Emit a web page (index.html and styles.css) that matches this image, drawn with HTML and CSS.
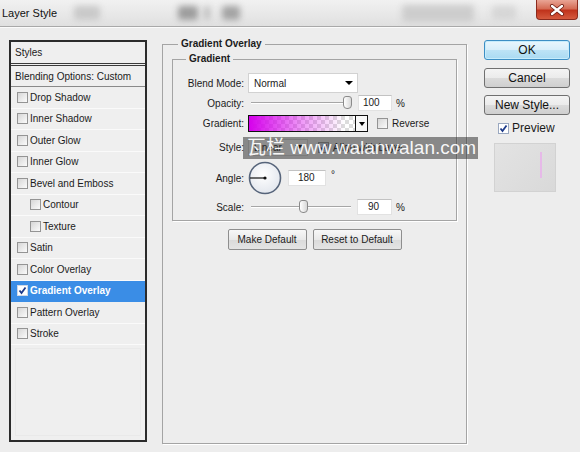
FILE: index.html
```html
<!DOCTYPE html>
<html>
<head>
<meta charset="utf-8">
<link rel="stylesheet" href="styles.css">
</head>
<body>
<div class="titlebar">
  <span class="title">Layer Style</span>
  <span class="blob b1"></span>
  <span class="blob b2"></span>
  <span class="blob b3"></span>
  <span class="blob b4"></span>
  <span class="blob b5"></span>
  <span class="blob b6"></span>
  <div class="close">
    <svg width="16" height="12" viewBox="0 0 16 12"><path d="M3 2 L13 10 M13 2 L3 10" stroke="#6b1a10" stroke-width="4" stroke-linecap="round"/><path d="M3 2 L13 10 M13 2 L3 10" stroke="#fff" stroke-width="2.4" stroke-linecap="round"/></svg>
  </div>
</div>

<div class="main">
  <div class="styles">
    <div class="shead">Styles</div>
    <div class="sblend">Blending Options: Custom</div>
    <div class="item"><span class="cb"></span>Drop Shadow</div>
    <div class="item"><span class="cb"></span>Inner Shadow</div>
    <div class="item"><span class="cb"></span>Outer Glow</div>
    <div class="item"><span class="cb"></span>Inner Glow</div>
    <div class="item"><span class="cb"></span>Bevel and Emboss</div>
    <div class="item sub"><span class="cb"></span>Contour</div>
    <div class="item sub"><span class="cb"></span>Texture</div>
    <div class="item"><span class="cb"></span>Satin</div>
    <div class="item"><span class="cb"></span>Color Overlay</div>
    <div class="item active"><span class="cb white"><svg width="9" height="9" viewBox="0 0 9 9"><path d="M1.5 4.5 L3.5 7 L7.5 1.5" stroke="#1d3a8a" stroke-width="1.8" fill="none"/></svg></span>Gradient Overlay</div>
    <div class="item"><span class="cb"></span>Pattern Overlay</div>
    <div class="item"><span class="cb"></span>Stroke</div>
    <div class="sfill"></div>
  </div>

  <fieldset class="outer">
    <legend class="olegend">Gradient Overlay</legend>
    <fieldset class="inner">
      <legend class="ilegend">Gradient</legend>
      <div class="rows">
        <div class="row r-blend">
          <span class="lbl">Blend Mode:</span>
          <div class="select blend"><span>Normal</span><span class="arrow"></span></div>
        </div>
        <div class="row r-opac">
          <span class="lbl">Opacity:</span>
          <div class="slider"><div class="track"></div><div class="thumb t-opac"></div></div>
          <div class="num">100</div>
          <span class="pct">%</span>
        </div>
        <div class="row r-grad">
          <span class="lbl">Gradient:</span>
          <div class="swatch"><div class="gfill"></div><div class="gdrop"><span class="arrow small"></span></div></div>
          <span class="cb rev"></span><span class="cbtext">Reverse</span>
        </div>
        <div class="row r-style">
          <span class="lbl">Style:</span>
          <div class="select style"><span>Linear</span><span class="arrow"></span></div>
          <span class="cb align"><svg width="9" height="9" viewBox="0 0 9 9"><path d="M1.5 4.5 L3.5 7 L7.5 1.5" stroke="#1d3a8a" stroke-width="1.8" fill="none"/></svg></span><span class="cbtext">Align with Layer</span>
        </div>
        <div class="row r-angle">
          <span class="lbl">Angle:</span>
          <svg class="dial" width="34" height="34" viewBox="0 0 34 34">
            <defs><radialGradient id="dg" cx="45%" cy="40%" r="60%"><stop offset="0" stop-color="#ffffff"/><stop offset="1" stop-color="#e3e7ee"/></radialGradient></defs>
            <circle cx="17" cy="17" r="15.5" fill="url(#dg)" stroke="#56647a" stroke-width="1.6"/>
            <line x1="2" y1="17" x2="17" y2="17" stroke="#111" stroke-width="1.2"/>
            <circle cx="17" cy="17" r="1.6" fill="#111"/>
          </svg>
          <div class="num angle">180</div>
          <span class="deg">°</span>
        </div>
        <div class="row r-scale">
          <span class="lbl">Scale:</span>
          <div class="slider"><div class="track"></div><div class="thumb t-scale"></div></div>
          <div class="num scale">90</div>
          <span class="pct">%</span>
        </div>
      </div>
    </fieldset>
    <div class="defbtns">
      <div class="btn b-make">Make Default</div>
      <div class="btn b-reset">Reset to Default</div>
    </div>
  </fieldset>

  <div class="side">
    <div class="rbtn ok">OK</div>
    <div class="rbtn cancel">Cancel</div>
    <div class="rbtn newst">New Style...</div>
    <div class="prevrow"><span class="cb"><svg width="9" height="9" viewBox="0 0 9 9"><path d="M1.5 4.5 L3.5 7 L7.5 1.5" stroke="#1d3a8a" stroke-width="1.8" fill="none"/></svg></span><span class="prevtext">Preview</span></div>
    <div class="preview"><div class="pline"></div></div>
  </div>
</div>

<div class="watermark">瓦栏 www.walanwalan.com</div>
</body>
</html>
```

FILE: styles.css
```css
html, body {
  margin: 0;
  padding: 0;
}
body {
  width: 580px;
  height: 452px;
  overflow: hidden;
  position: relative;
  background: #ededed;
  font-family: "Liberation Sans", Arial, sans-serif;
  font-size: 10px;
  color: #1b1b1b;
}

/* title bar */
.titlebar {
  height: 26px;
  border-bottom: 1px solid #a9a9a9;
  box-shadow: 0 1px 0 #fbfbfb;
  background: linear-gradient(#f1f1f1, #e0e0e0);
  display: flex;
  align-items: center;
  overflow: hidden;
}
.title {
  font-size: 11px;
  margin-left: 2px;
  color: #111;
  width: 60px;
}
.blob {
  height: 14px;
  border-radius: 3px;
  filter: blur(3px);
  background: #c4c4c4;
}
.b1 { margin-left: 12px; width: 26px; background: #c9c9c9; }
.b2 { margin-left: 78px; width: 20px; background: #9d9d9d; }
.b3 { margin-left: 6px; width: 6px; background: #bdbdbd; }
.b4 { margin-left: 12px; width: 18px; background: #a4a4a4; }
.b5 { margin-left: 162px; width: 72px; height: 17px; background: #cdcdcd; }
.b6 { margin-left: 18px; width: 24px; background: #d6d6d6; }
.close {
  margin-left: auto;
  margin-right: 2px;
  align-self: flex-start;
  width: 42px;
  height: 20px;
  box-sizing: border-box;
  border: 1px solid #8b2a1d;
  border-top: none;
  border-radius: 0 0 4px 4px;
  background: linear-gradient(#e9a595 0%, #d56c55 45%, #c0331c 55%, #d55a3e 100%);
  display: flex;
  align-items: center;
  justify-content: center;
}

/* main layout */
.main {
  display: flex;
  align-items: flex-start;
  padding: 13px 0 0 9px;
}

/* left styles list */
.styles {
  width: 138px;
  height: 402px;
  box-sizing: border-box;
  border: 2px solid #2b2b2b;
  background: #efefef;
  display: flex;
  flex-direction: column;
}
.shead {
  height: 21px;
  border-bottom: 3px double #3a3a3a;
  padding-left: 4px;
  display: flex;
  align-items: center;
}
.sblend {
  height: 20px;
  border-bottom: 1px solid #8a8a8a;
  padding-left: 4px;
  display: flex;
  align-items: center;
}
.item {
  height: 21.5px;
  box-sizing: border-box;
  border-bottom: 1px solid #fafafa;
  padding-left: 6px;
  display: flex;
  align-items: center;
}
.item.sub { padding-left: 19px; }
.item.active {
  background: #3a8de6;
  color: #fff;
  font-weight: bold;
  border-bottom-color: #3a8de6;
}
.sfill {
  flex: 1;
  margin: 3px 4px 4px 4px;
  border: 1px solid #e9e9e9;
}
.cb {
  width: 11px;
  height: 11px;
  box-sizing: border-box;
  border: 1px solid #949494;
  background: linear-gradient(135deg, #d6d6d6, #fbfbfb);
  margin-right: 2px;
  display: flex;
  align-items: center;
  justify-content: center;
  flex: none;
}
.cb.white { background: #fff; border-color: #cfd8e6; }

/* center group */
.outer {
  margin: -2px 0 0 15px;
  width: 305px;
  height: 406px;
  box-sizing: border-box;
  border: 1px solid #a4a4a4;
  box-shadow: 1px 1px 0 #fff;
  padding: 3px 9px 0 9px;
  min-width: 0;
}
.olegend {
  font-weight: bold;
  font-size: 10px;
  line-height: 12px;
  padding: 0 3px;
  margin-left: 6px;
}
.inner {
  margin: 0;
  width: 285px;
  box-sizing: border-box;
  border: 1px solid #a4a4a4;
  box-shadow: 1px 1px 0 #fff;
  padding: 0 0 2px 0;
  min-width: 0;
}
.ilegend {
  font-weight: bold;
  font-size: 10px;
  line-height: 12px;
  padding: 0 3px;
  margin-left: 13px;
}
.rows {
  margin-top: 8px;
  display: flex;
  flex-direction: column;
}
.row {
  display: flex;
  align-items: center;
}
.r-blend { height: 20px; }
.r-opac { height: 20px; }
.r-grad { height: 21px; }
.r-style { height: 26px; }
.r-angle { height: 36px; }
.r-scale { height: 22px; }
.lbl {
  width: 71px;
  text-align: right;
  margin-right: 4px;
  flex: none;
}
.select {
  height: 20px;
  box-sizing: border-box;
  background: #fff;
  border: 1px solid #d2d2d2;
  display: flex;
  align-items: center;
  justify-content: space-between;
  padding: 0 4px 0 5px;
}
.select.blend { width: 110px; }
.select.style { width: 60px; height: 17px; background: #f6f6f6; }
.arrow {
  width: 0;
  height: 0;
  border-left: 4px solid transparent;
  border-right: 4px solid transparent;
  border-top: 4px solid #000;
}
.arrow.small {
  border-left-width: 3px;
  border-right-width: 3px;
  border-top-width: 4px;
}
.slider {
  width: 106px;
  height: 16px;
  position: relative;
  display: flex;
  align-items: center;
}
.track {
  flex: 1;
  margin: 0 3px;
  height: 0;
  border-top: 1px solid #a6a6a6;
  border-bottom: 1px solid #fff;
}
.thumb {
  position: absolute;
  top: 1px;
  width: 9px;
  height: 13px;
  box-sizing: border-box;
  border: 1px solid #8a8a8a;
  border-radius: 3px 3px 4px 4px;
  background: linear-gradient(to right, #ffffff, #d8d8d8);
}
.t-opac { left: 95px; }
.t-scale { left: 51px; }
.num {
  width: 34px;
  height: 16px;
  box-sizing: border-box;
  background: #fff;
  border: 1px solid #e2e2e2;
  border-top-color: #c2c2c2;
  padding-left: 4px;
  line-height: 14px;
  margin-left: 4px;
}
.num.scale { margin-left: 3px; width: 35px; padding-left: 10px; }
.num.angle { width: 38px; margin-left: 6px; padding-left: 9px; }
.pct { margin-left: 4px; }
.deg { margin-left: 5px; align-self: flex-start; margin-top: 9px; }
.swatch {
  width: 120px;
  height: 17px;
  box-sizing: border-box;
  border: 1px solid #111;
  display: flex;
}
.gfill {
  flex: 1;
  background:
    linear-gradient(to right, rgba(214, 0, 236, 1), rgba(214, 0, 236, 0.4) 50%, rgba(214, 0, 236, 0) 90%),
    repeating-conic-gradient(#dcdcdc 0 25%, #ffffff 0 50%) 0 0 / 8px 8px;
}
.gdrop {
  width: 11px;
  border-left: 1px solid #111;
  background: #f7f7f7;
  display: flex;
  align-items: center;
  justify-content: center;
}
.cb.rev { margin-left: 9px; }
.cb.align { margin-left: 10px; background: #c9d3e6; }
.cbtext { margin-left: 2px; }
.dial { margin-left: 0; flex: none; }

.defbtns {
  margin-top: 8px;
  display: flex;
  justify-content: center;
  gap: 6px;
}
.btn {
  height: 21px;
  box-sizing: border-box;
  border: 1px solid #8e8e8e;
  border-radius: 2px;
  background: linear-gradient(#f7f7f7, #e9e9e9 50%, #dadada 51%, #e4e4e4);
  display: flex;
  align-items: center;
  justify-content: center;
}
.b-make { width: 79px; }
.b-reset { width: 89px; }

/* right side */
.side {
  margin-left: 17px;
  width: 86px;
  display: flex;
  flex-direction: column;
}
.rbtn {
  height: 20px;
  box-sizing: border-box;
  border: 1px solid #707070;
  border-radius: 3px;
  background: linear-gradient(#f4f4f4, #ebebeb 50%, #dbdbdb 51%, #cfcfcf);
  font-size: 12px;
  color: #111;
  display: flex;
  align-items: center;
  justify-content: center;
}
.rbtn.ok {
  border-color: #3c8ec4;
  background: linear-gradient(#e9f6fd, #d7eefa 50%, #bde3f6 51%, #a9daf2);
  box-shadow: inset 0 0 0 1px #c6ecfc;
}
.rbtn.cancel { margin-top: 8px; }
.rbtn.newst { margin-top: 7px; }
.prevrow {
  margin-top: 6px;
  margin-left: 14px;
  height: 14px;
  display: flex;
  align-items: center;
}
.prevrow .cb { background: #fff; border-color: #9aa8c0; }
.prevtext { font-size: 12px; margin-left: 1px; }
.preview {
  margin: 8px 0 0 10px;
  width: 62px;
  height: 49px;
  box-sizing: border-box;
  border: 1px solid #d2d2d2;
  background: linear-gradient(135deg, #e3e3e3, #d9d9d9);
  display: flex;
  justify-content: flex-end;
  padding: 8px 13px 0 0;
}
.pline {
  width: 2px;
  height: 26px;
  background: #e6b9e8;
}

/* watermark overlay */
.watermark {
  position: absolute;
  left: 243px;
  top: 137px;
  width: 235px;
  height: 22px;
  box-sizing: border-box;
  background: rgba(45, 45, 45, 0.52);
  color: rgba(255, 255, 255, 0.95);
  font-family: "Liberation Sans", "Noto Sans CJK SC", sans-serif;
  font-size: 19px;
  line-height: 22px;
  padding-left: 4px;
  white-space: nowrap;
  overflow: hidden;
}
```
